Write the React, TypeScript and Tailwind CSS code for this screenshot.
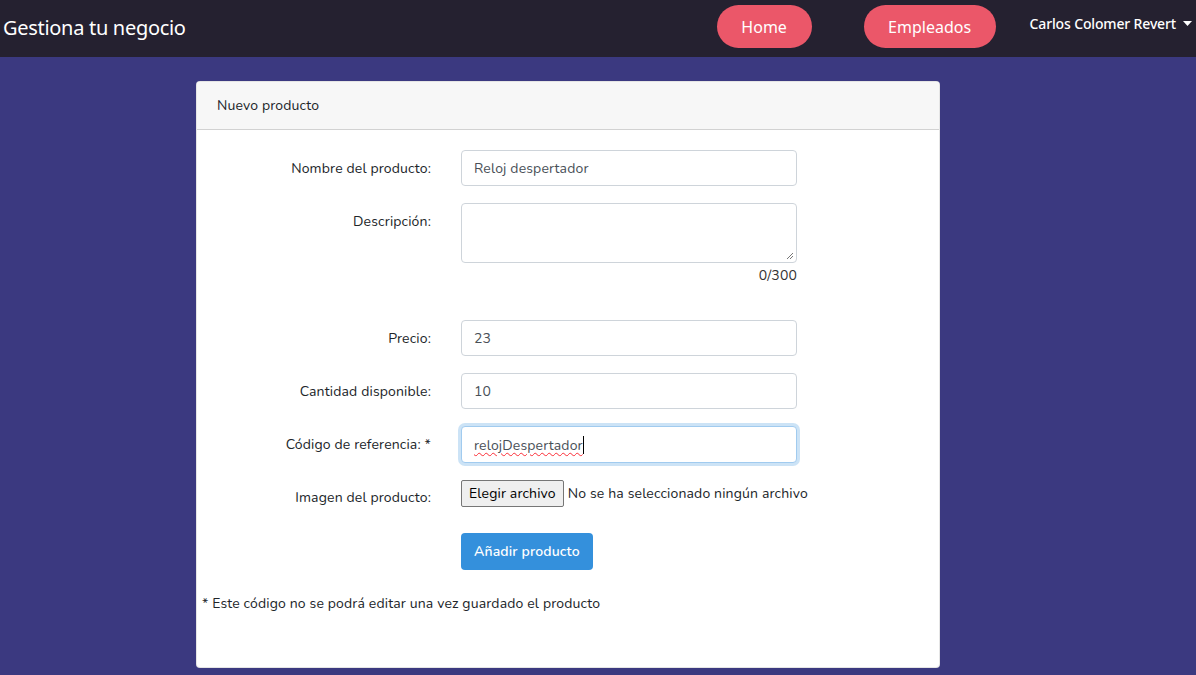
import React from 'react'

const fields = [
  { label: 'Precio:', value: '23' },
  { label: 'Cantidad disponible:', value: '10' },
]

function Row({ label, children, className = '' }: { label: string; children: React.ReactNode; className?: string }) {
  return (
    <div className={`flex ${className}`}>
      <label className="w-[244px] px-[15px] pt-[8px] text-right leading-[22px]">{label}</label>
      <div className="w-[366px] px-[15px]">{children}</div>
    </div>
  )
}

const inputCls =
  'h-[36px] w-full rounded border border-[#ced4da] bg-white px-3 pt-[1px] text-[14px] text-[#495057] flex items-center'

export default function App() {
  return (
    <div className="min-h-screen bg-[#3b3980] font-['Nunito','Lato','Noto_Sans',sans-serif] text-[14px] tracking-[0.15px] text-[#212529]">
      <nav className="flex h-[57px] items-start bg-[#252130] font-['Noto_Sans',sans-serif] tracking-normal text-white">
        <span className="ml-[3px] mt-[13px] text-[20px] tracking-[-0.3px]">Gestiona tu negocio</span>
        <div className="ml-auto flex items-start pt-[5px]">
          <button className="h-[43px] w-[95px] rounded-full bg-[#eb5769] text-[16px]">Home</button>
          <button className="ml-[52px] h-[43px] w-[132px] rounded-full bg-[#eb5769] text-[16px]">Empleados</button>
          <div className="ml-[34px] mr-[4px] mt-[8px] flex items-center text-[14px] font-medium tracking-[-0.15px]">
            Carlos Colomer Revert
            <svg className="ml-[7px]" width="9" height="5" viewBox="0 0 9 5">
              <path d="M0 0h9L4.5 5z" fill="white" />
            </svg>
          </div>
        </div>
      </nav>

      <div className="pl-[196px] pt-[24px]">
        <div className="w-[744px] overflow-hidden rounded border border-black/10 bg-white">
          <div className="h-[48px] border-b border-black/15 bg-[#f7f7f7] px-5 py-[12px] leading-[24px]">Nuevo producto</div>
          <div className="px-5 pb-[52px] pt-[20px]">
            <div className="-mx-[15px]">
              <Row label="Nombre del producto:">
                <div className={inputCls}>Reloj despertador</div>
              </Row>
              <Row label="Descripción:" className="mt-[17px]">
                <div className="relative h-[60px] w-full rounded border border-[#ced4da]">
                  <svg className="absolute bottom-[2px] right-[2px]" width="8" height="8" viewBox="0 0 8 8">
                    <path d="M7 1L1 7M7 4L4 7" stroke="#777" strokeWidth="1" />
                  </svg>
                </div>
                <div className="mt-[2px] text-right leading-[22px] text-[#333]">0/300</div>
              </Row>
              {fields.map((f, i) => (
                <Row key={f.label} label={f.label} className={i === 0 ? 'mt-[33px]' : 'mt-[17px]'}>
                  <div className={inputCls}>{f.value}</div>
                </Row>
              ))}
              <Row label="Código de referencia: *" className="mt-[17px]">
                <div className="flex h-[37px] w-full items-center rounded border border-[#a1cbef] bg-white px-3 pt-[1px] text-[#495057] shadow-[0_0_0_3px_rgba(52,144,220,0.25)]">
                  <span className="underline decoration-red-500 decoration-wavy decoration-1 underline-offset-2">relojDespertador</span>
                  <span className="h-[18px] w-px bg-black" />
                </div>
              </Row>
              <div className="mt-[17px] flex">
                <label className="w-[244px] px-[15px] pt-[7px] text-right leading-[22px]">Imagen del producto:</label>
                <div className="flex items-start px-[15px]">
                  <span className="flex h-[27px] items-center rounded-[2px] border border-[#767676] bg-[#efefef] px-[7px] text-[14px] text-black">Elegir archivo</span>
                  <span className="ml-[4px] mt-[3px]">No se ha seleccionado ningún archivo</span>
                </div>
              </div>
              <div className="mt-[24px] flex">
                <div className="w-[244px]" />
                <div className="px-[15px]">
                  <button className="h-[37px] rounded bg-[#3490dc] px-[13px] text-[14px] font-semibold text-white">Añadir producto</button>
                </div>
              </div>
              <p className="mt-[23px] leading-[22px]">* Este código no se podrá editar una vez guardado el producto</p>
            </div>
          </div>
        </div>
      </div>
    </div>
  )
}
